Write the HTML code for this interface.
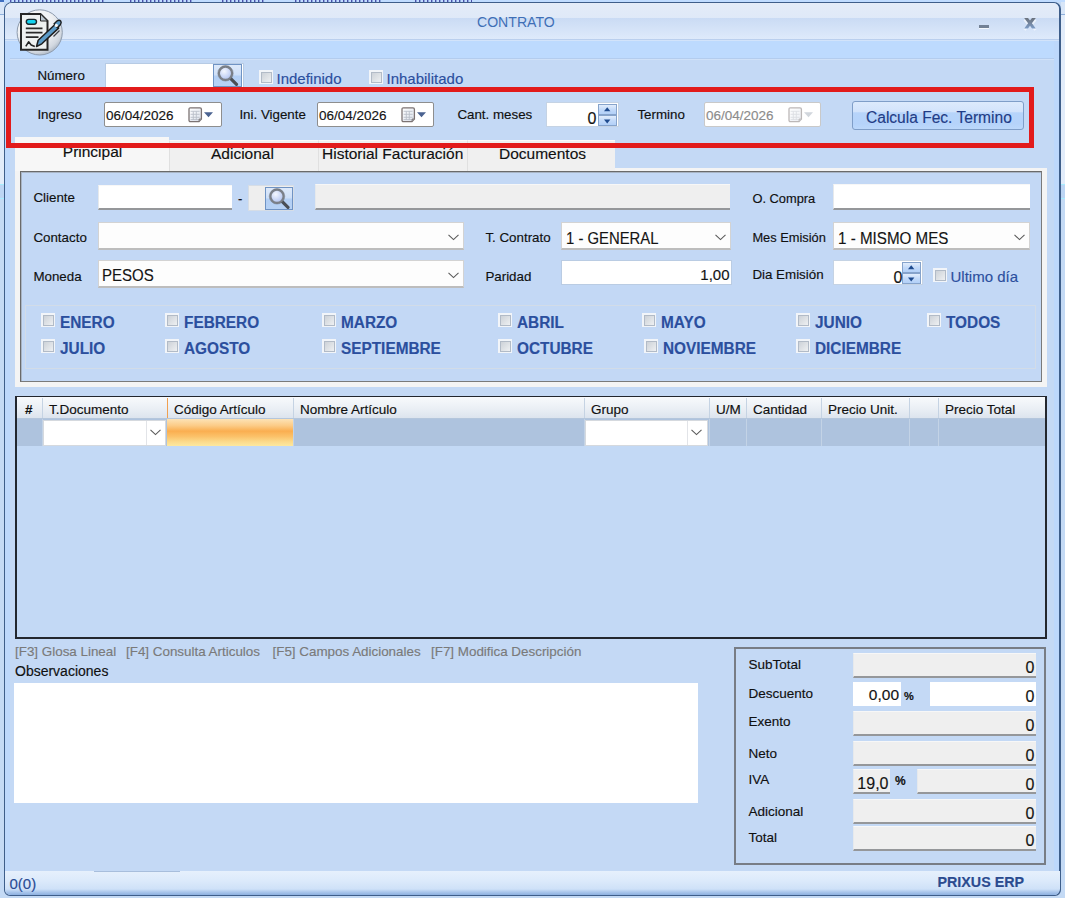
<!DOCTYPE html>
<html><head><meta charset="utf-8"><title>CONTRATO</title>
<style>
*{margin:0;padding:0;box-sizing:border-box;}
html,body{width:1065px;height:898px;overflow:hidden;}
body{position:relative;background:#BFDBFF;font-family:"Liberation Sans", sans-serif;}
div{position:absolute;}
.t{white-space:nowrap;-webkit-text-stroke:0.15px currentColor;}
svg{display:block;}
</style></head><body>

<div style="left:0px;top:0px;width:1065px;height:898px;background:#C4DAF5;"></div>
<div style="left:0px;top:0px;width:4px;height:14px;background:#D8E6F8;"></div>
<div style="left:0px;top:14px;width:4px;height:1px;background:#8FB0DC;"></div>
<div style="left:0px;top:15px;width:4px;height:169px;background:#E2ECFA;"></div>
<div style="left:0px;top:184px;width:4px;height:1px;background:#A6EEFF;"></div>
<div style="left:0px;top:185px;width:4px;height:13px;background:#BCD5F4;"></div>
<div style="left:0px;top:198px;width:4px;height:1px;background:#A6EEFF;"></div>
<div style="left:1061px;top:0px;width:4px;height:14px;background:#D8E6F8;"></div>
<div style="left:1061px;top:14px;width:4px;height:1px;background:#8FB0DC;"></div>
<div style="left:1061px;top:15px;width:4px;height:169px;background:#E2ECFA;"></div>
<div style="left:1061px;top:184px;width:4px;height:1px;background:#A6EEFF;"></div>
<div style="left:1061px;top:185px;width:4px;height:13px;background:#BCD5F4;"></div>
<div style="left:1061px;top:198px;width:4px;height:1px;background:#A6EEFF;"></div>
<div style="left:0px;top:0px;width:4px;height:2px;background:#3F6FC0;"></div>
<div style="left:4px;top:0px;width:1061px;height:2px;background:#C0DCFF;"></div>
<div style="left:10px;top:0px;width:95px;height:2px;background:repeating-linear-gradient(90deg,#4B4FA8 0px,#4B4FA8 1px,#8CA6DC 1px,#8CA6DC 2px,#C0DCFF 2px,#C0DCFF 4px);"></div>
<div style="left:130px;top:0px;width:62px;height:2px;background:repeating-linear-gradient(90deg,#4B4FA8 0px,#4B4FA8 1px,#8CA6DC 1px,#8CA6DC 2px,#C0DCFF 2px,#C0DCFF 4px);"></div>
<div style="left:222px;top:0px;width:44px;height:2px;background:repeating-linear-gradient(90deg,#4B4FA8 0px,#4B4FA8 1px,#8CA6DC 1px,#8CA6DC 2px,#C0DCFF 2px,#C0DCFF 4px);"></div>
<div style="left:295px;top:0px;width:87px;height:2px;background:repeating-linear-gradient(90deg,#4B4FA8 0px,#4B4FA8 1px,#8CA6DC 1px,#8CA6DC 2px,#C0DCFF 2px,#C0DCFF 4px);"></div>
<div style="left:415px;top:0px;width:57px;height:2px;background:repeating-linear-gradient(90deg,#4B4FA8 0px,#4B4FA8 1px,#8CA6DC 1px,#8CA6DC 2px,#C0DCFF 2px,#C0DCFF 4px);"></div>
<div style="left:4px;top:2px;width:1057px;height:894px;background:#C4D9F5;border:1.5px solid #3E5E8A;border-right-width:2px;border-radius:8px 7px 6px 6px;overflow:hidden;"></div>
<div style="left:5px;top:3px;width:1054px;height:15px;background:linear-gradient(#E4ECF8,#DFE9F8);border-radius:7px 6px 0 0;"></div>
<div style="left:5px;top:18px;width:1054px;height:21px;background:linear-gradient(#CADBF4,#DEEAFB);"></div>
<div style="left:5px;top:39px;width:1054px;height:1px;background:#BACFEE;"></div>
<div style="left:5px;top:40px;width:1054px;height:1px;background:#D2E3FA;"></div>
<div style="left:5px;top:41px;width:1054px;height:17px;background:#BDDAFE;"></div>
<div style="left:10px;top:58px;width:1044px;height:1px;background:#B3CCEE;"></div>
<div style="left:10px;top:59px;width:1044px;height:1px;background:#D0E1F8;"></div>
<div style="left:5px;top:41px;width:5px;height:830px;background:#BDD8FC;"></div>
<div style="left:1054px;top:41px;width:5px;height:830px;background:#BDD8FC;"></div>
<div class="t" style="left:477px;top:15.45px;font-size:14.6px;line-height:14.6px;color:#3F6FB6;transform:scaleX(0.965);transform-origin:0 0;-webkit-text-stroke:0;">CONTRATO</div>
<div style="left:979px;top:25px;width:10px;height:3px;background:#728196;box-shadow:0 1px 0 #F4F8FD;"></div>
<div style="left:1022px;top:16px;width:16px;height:15px;"><svg width="16" height="15" viewBox="0 0 16 15">
<defs><linearGradient id="xg" x1="0" y1="0" x2="0" y2="1"><stop offset="0" stop-color="#6B727C"/><stop offset="0.5" stop-color="#74859E"/><stop offset="1" stop-color="#7C9CC8"/></linearGradient></defs>
<path d="M2.5 2.8 L7 8 L2.5 13.2 M13.5 2.8 L9 8 L13.5 13.2" fill="none" stroke="#F2F6FC" stroke-width="2.6" opacity="0.8" transform="translate(0,0.8)"/>
<path d="M2.2 2 H6 L8 4.6 L10 2 H13.8 L9.9 7.2 L13.8 12.5 H10 L8 9.8 L6 12.5 H2.2 L6.1 7.2 Z" fill="url(#xg)"/>
</svg></div>
<div style="left:0px;top:0px;width:70px;height:60px;"><svg width="70" height="60" viewBox="0 0 70 60">
<defs><radialGradient id="g1" cx="38%" cy="30%" r="75%"><stop offset="0" stop-color="#FFFFFF"/><stop offset="0.55" stop-color="#EEF0F3"/><stop offset="0.85" stop-color="#D2D8E0"/><stop offset="1" stop-color="#A9B4C2"/></radialGradient></defs>
<circle cx="39.7" cy="32.4" r="22.6" fill="url(#g1)" stroke="#8E9BAD" stroke-width="1"/>
<path d="M21 14 H40.5 L47.5 21 V49.8 H21 Z" fill="#EEF1F1" stroke="#262626" stroke-width="2"/>
<path d="M40.5 14 V21 H47.5 Z" fill="#BCC6CF" stroke="#262626" stroke-width="1"/>
<rect x="26.3" y="19.4" width="10.2" height="4.8" rx="2.4" fill="#12D3F0" stroke="#1B2A30" stroke-width="1.4"/>
<path d="M25.8 28.3 H42.5 M25.8 32.7 H42.5 M25.8 37.2 H38.5" stroke="#2A2A2A" stroke-width="1.7"/>
<path d="M25.8 46.3 L28.6 41.8 L31.2 44.9 L34.8 46.4" fill="none" stroke="#222" stroke-width="1.6" stroke-linejoin="round"/>
<path d="M36.5 46.5 L38.2 40.2 L55 24.5 L58.6 28.1 L41.8 43.8 Z" fill="#5C9BC8" stroke="#1D1D1D" stroke-width="1.5" stroke-linejoin="round"/>
<path d="M54.2 23.8 L57.2 20.8 Q59.5 19.5 60.8 21.2 Q61.8 22.6 60.3 24.8 L57.6 27.6 Z" fill="#5C9BC8" stroke="#1D1D1D" stroke-width="1.4"/>
<circle cx="56.3" cy="25.4" r="1.6" fill="#F4F6F8"/>
<path d="M53.5 36.5 L59.5 30.5" stroke="#3A3F45" stroke-width="1.2"/>
</svg></div>
<div class="t" style="left:37.4px;top:68.71px;font-size:13.35px;line-height:13.35px;color:#101010;">Número</div>
<div style="left:105px;top:63px;width:139px;height:24px;background:#fff;border:1px solid #B7CBE4;border-bottom:none;"></div>
<div style="left:213px;top:64px;width:29px;height:23px;border:1px solid #6F93C4;background:linear-gradient(#DDE9FA 0%,#CFE0F8 45%,#B3CFF4 55%,#B7D2F5 100%);"><svg style="position:absolute;left:0px;top:0px" width="27" height="21" viewBox="0 0 27 21">
<defs><radialGradient id="lens" cx="40%" cy="35%" r="70%"><stop offset="0" stop-color="#F4F7FE"/><stop offset="0.6" stop-color="#C9D6F6"/><stop offset="1" stop-color="#AFC0EC"/></radialGradient></defs>
<path d="M16.5 13.3 L22.5 19.3" stroke="#4A4F56" stroke-width="3.2" stroke-linecap="round"/>
<circle cx="11.5" cy="8.3" r="6.6" fill="url(#lens)" stroke="#7B8088" stroke-width="2.2"/>
<circle cx="11.5" cy="8.3" r="7.8" fill="none" stroke="#5E636B" stroke-width="0.6" opacity="0.6"/>
</svg></div>
<div style="left:259px;top:70px;width:14px;height:14px;border:1.5px solid #F2F5F9;background:#F2F5F9;"><div style="left:0.5px;top:0.5px;right:0.5px;bottom:0.5px;border:1.5px solid #B2BBC7;background:linear-gradient(135deg,#CDD2D8,#EEF0F2);"></div></div>
<div class="t" style="left:276.5px;top:71.31px;font-size:15px;line-height:15px;color:#2B4F9E;">Indefinido</div>
<div style="left:369px;top:70px;width:14px;height:14px;border:1.5px solid #F2F5F9;background:#F2F5F9;"><div style="left:0.5px;top:0.5px;right:0.5px;bottom:0.5px;border:1.5px solid #B2BBC7;background:linear-gradient(135deg,#CDD2D8,#EEF0F2);"></div></div>
<div class="t" style="left:386.5px;top:71.31px;font-size:15px;line-height:15px;color:#2B4F9E;">Inhabilitado</div>
<div style="left:6px;top:87px;width:1028px;height:61px;border:5px solid #E21B1B;z-index:5;"></div>
<div class="t" style="left:37.4px;top:108.21px;font-size:13.35px;line-height:13.35px;color:#101010;">Ingreso</div>
<div style="left:104px;top:102px;width:118px;height:25px;background:#fff;border:1px solid #8E8E8E;border-radius:2px;"></div>
<div class="t" style="left:106px;top:108.58px;font-size:13.5px;line-height:13.5px;color:#141414;">06/04/2026</div>
<div style="left:188px;top:107px;width:30px;height:17px;opacity:1"><svg width="30" height="17" viewBox="0 0 30 17">
<defs><linearGradient id="cg" x1="0" y1="0" x2="1" y2="1"><stop offset="0" stop-color="#FFFFFF"/><stop offset="1" stop-color="#DCE2EC"/></linearGradient></defs>
<path d="M1 2.2 Q1 0.8 2.4 0.8 H12 Q13.4 0.8 13.4 2.2 V12 L11 14.6 H2.4 Q1 14.6 1 13.2 Z" fill="url(#cg)" stroke="#7C7373" stroke-width="1.3"/>
<path d="M2.6 4.3 H11.6 M2.6 7.3 H11.6 M2.6 10.3 H11.6 M2.6 12.6 H10.6 M5.3 4.3 V13 M8.3 4.3 V13" stroke="#BAC0CA" stroke-width="0.9"/>
<path d="M11 14.6 V12 H13.4" fill="#9AA0A8" stroke="#7C7373" stroke-width="0.8"/>
<path d="M16 5.2 H25 L20.5 10.2 Z" fill="#4A6290"/></svg></div>
<div class="t" style="left:239.4px;top:108.21px;font-size:13.35px;line-height:13.35px;color:#101010;">Ini. Vigente</div>
<div style="left:317px;top:102px;width:117px;height:25px;background:#fff;border:1px solid #8E8E8E;border-radius:2px;"></div>
<div class="t" style="left:319px;top:108.58px;font-size:13.5px;line-height:13.5px;color:#141414;">06/04/2026</div>
<div style="left:401px;top:107px;width:30px;height:17px;opacity:1"><svg width="30" height="17" viewBox="0 0 30 17">
<defs><linearGradient id="cg" x1="0" y1="0" x2="1" y2="1"><stop offset="0" stop-color="#FFFFFF"/><stop offset="1" stop-color="#DCE2EC"/></linearGradient></defs>
<path d="M1 2.2 Q1 0.8 2.4 0.8 H12 Q13.4 0.8 13.4 2.2 V12 L11 14.6 H2.4 Q1 14.6 1 13.2 Z" fill="url(#cg)" stroke="#7C7373" stroke-width="1.3"/>
<path d="M2.6 4.3 H11.6 M2.6 7.3 H11.6 M2.6 10.3 H11.6 M2.6 12.6 H10.6 M5.3 4.3 V13 M8.3 4.3 V13" stroke="#BAC0CA" stroke-width="0.9"/>
<path d="M11 14.6 V12 H13.4" fill="#9AA0A8" stroke="#7C7373" stroke-width="0.8"/>
<path d="M16 5.2 H25 L20.5 10.2 Z" fill="#4A6290"/></svg></div>
<div class="t" style="left:457.4px;top:108.21px;font-size:13.35px;line-height:13.35px;color:#101010;">Cant. meses</div>
<div style="left:546px;top:102px;width:73px;height:25px;background:#fff;border:1px solid #C5D3E4;"></div>
<div style="left:598px;top:104px;width:19px;height:22px;"><svg width="19" height="22" viewBox="0 0 19 22">
<defs><linearGradient id="sg" x1="0" y1="0" x2="0" y2="1"><stop offset="0" stop-color="#E2EDFC"/><stop offset="0.5" stop-color="#C3DAF9"/><stop offset="1" stop-color="#B2D0F8"/></linearGradient></defs>
<rect x="0" y="0" width="19" height="22" fill="#86A3CB"/>
<rect x="1" y="1" width="17" height="9.0" fill="url(#sg)"/>
<rect x="1" y="12.0" width="17" height="9.0" fill="url(#sg)"/>
<path d="M6 7.2 L12.4 7.2 L9.2 3.2 Z" fill="#1F4B8E"/>
<path d="M6 15.4 L12.4 15.4 L9.2 19.4 Z" fill="#1F4B8E"/></svg></div>
<div class="t" style="left:566.5px;width:30px;text-align:right;top:110.96px;font-size:16px;line-height:16px;color:#141414;">0</div>
<div class="t" style="left:637.4px;top:108.21px;font-size:13.35px;line-height:13.35px;color:#101010;">Termino</div>
<div style="left:704px;top:102px;width:117px;height:25px;background:#fff;border:1px solid #C9C9C9;border-radius:2px;"></div>
<div class="t" style="left:706px;top:108.58px;font-size:13.5px;line-height:13.5px;color:#8C8C8C;">06/04/2026</div>
<div style="left:788px;top:107px;width:30px;height:17px;opacity:0.5"><svg width="30" height="17" viewBox="0 0 30 17">
<defs><linearGradient id="cg" x1="0" y1="0" x2="1" y2="1"><stop offset="0" stop-color="#FFFFFF"/><stop offset="1" stop-color="#DCE2EC"/></linearGradient></defs>
<path d="M1 2.2 Q1 0.8 2.4 0.8 H12 Q13.4 0.8 13.4 2.2 V12 L11 14.6 H2.4 Q1 14.6 1 13.2 Z" fill="url(#cg)" stroke="#7C7373" stroke-width="1.3"/>
<path d="M2.6 4.3 H11.6 M2.6 7.3 H11.6 M2.6 10.3 H11.6 M2.6 12.6 H10.6 M5.3 4.3 V13 M8.3 4.3 V13" stroke="#BAC0CA" stroke-width="0.9"/>
<path d="M11 14.6 V12 H13.4" fill="#9AA0A8" stroke="#7C7373" stroke-width="0.8"/>
<path d="M16 5.2 H25 L20.5 10.2 Z" fill="#A5AEBB"/></svg></div>
<div style="left:852px;top:101px;width:172px;height:29px;border:1px solid #8FAAD0;border-radius:3px;background:linear-gradient(#DCEAFC 0%,#D2E3FB 36%,#B7D4FA 40%,#B5D3FA 80%,#BCD8FB 100%);border-color:#7F9EC8;"></div>
<div class="t" style="left:866px;top:109.76px;font-size:16px;line-height:16px;color:#1F3C86;transform:scaleX(0.972);transform-origin:0 0;">Calcula Fec. Termino</div>
<div style="left:15px;top:168px;width:1032px;height:219px;background:#F4F4F4;"></div>
<div style="left:15px;top:137px;width:154px;height:34px;background:#F7F7F7;"></div>
<div style="left:169px;top:140px;width:149px;height:31px;background:#F0F0F0;border-left:1px solid #E0E0E0;border-top:1px solid #FAFAFA;"></div>
<div class="t" style="left:211px;top:146.39px;font-size:15.5px;line-height:15.5px;color:#101010;">Adicional</div>
<div style="left:318px;top:140px;width:149px;height:31px;background:#F0F0F0;border-left:1px solid #E0E0E0;border-top:1px solid #FAFAFA;"></div>
<div class="t" style="left:322px;top:146.39px;font-size:15.5px;line-height:15.5px;color:#101010;">Historial Facturación</div>
<div style="left:467px;top:140px;width:148px;height:31px;background:#F0F0F0;border-left:1px solid #E0E0E0;border-top:1px solid #FAFAFA;"></div>
<div class="t" style="left:499px;top:146.39px;font-size:15.5px;line-height:15.5px;color:#101010;">Documentos</div>
<div class="t" style="left:62.8px;top:143.89px;font-size:15.5px;line-height:15.5px;color:#101010;">Principal</div>
<div style="left:615px;top:140px;width:432px;height:28px;background:#C4D9F5;"></div>
<div style="left:20px;top:171px;width:1022px;height:211px;background:#C3D8F5;border:1px solid #6A6A6A;border-right-color:#7A7A7A;border-bottom-color:#7A7A7A;box-shadow:inset 1px 1px 0 #A8B4C4;"></div>
<div class="t" style="left:33.4px;top:190.71px;font-size:13.35px;line-height:13.35px;color:#101010;">Cliente</div>
<div style="left:98px;top:185px;width:134px;height:25px;background:#FFFFFF;border-left:1px solid #E6E9EC;border-top:1px solid #F7F7F7;border-bottom:2px solid #95979A;"></div>
<div class="t" style="left:238px;top:192.00px;font-size:13px;line-height:13px;color:#101010;">-</div>
<div style="left:248px;top:185px;width:46px;height:26px;background:#EEEEEE;border:1px solid #D6DDE6;"></div>
<div style="left:265px;top:187px;width:28px;height:23px;border:1px solid #6F93C4;background:linear-gradient(#DDE9FA 0%,#CFE0F8 45%,#B3CFF4 55%,#B7D2F5 100%);"><svg style="position:absolute;left:0px;top:0px" width="26" height="21" viewBox="0 0 26 21">
<defs><radialGradient id="lens" cx="40%" cy="35%" r="70%"><stop offset="0" stop-color="#F4F7FE"/><stop offset="0.6" stop-color="#C9D6F6"/><stop offset="1" stop-color="#AFC0EC"/></radialGradient></defs>
<path d="M16.0 13.3 L22.0 19.3" stroke="#4A4F56" stroke-width="3.2" stroke-linecap="round"/>
<circle cx="11.0" cy="8.3" r="6.6" fill="url(#lens)" stroke="#7B8088" stroke-width="2.2"/>
<circle cx="11.0" cy="8.3" r="7.8" fill="none" stroke="#5E636B" stroke-width="0.6" opacity="0.6"/>
</svg></div>
<div style="left:315px;top:184px;width:415px;height:26px;background:#EFEFEF;border-left:1px solid #E6E9EC;border-top:1px solid #F7F7F7;border-bottom:2px solid #95979A;"></div>
<div class="t" style="left:752.4px;top:192.63px;font-size:12.85px;line-height:12.85px;color:#101010;">O. Compra</div>
<div style="left:833px;top:184px;width:197px;height:26px;background:#FFFFFF;border-left:1px solid #E6E9EC;border-top:1px solid #F7F7F7;border-bottom:2px solid #95979A;"></div>
<div class="t" style="left:33.4px;top:230.71px;font-size:13.35px;line-height:13.35px;color:#101010;">Contacto</div>
<div style="left:98px;top:222px;width:366px;height:28px;background:#FDFDFD;border:1px solid #D3D3D3;border-bottom:2px solid #BDBDBD;"></div>
<div style="left:448px;top:234px;width:11px;height:7px;"><svg width="11" height="7" viewBox="0 0 11 7"><path d="M0.5 0.8 L5.5 5.6 L10.5 0.8" fill="none" stroke="#5A5A5A" stroke-width="1.1"/></svg></div>
<div class="t" style="left:485.4px;top:231.21px;font-size:13.35px;line-height:13.35px;color:#101010;">T. Contrato</div>
<div style="left:561px;top:222px;width:170px;height:28px;background:#FDFDFD;border:1px solid #D3D3D3;border-bottom:2px solid #BDBDBD;"></div>
<div style="left:715px;top:234px;width:11px;height:7px;"><svg width="11" height="7" viewBox="0 0 11 7"><path d="M0.5 0.8 L5.5 5.6 L10.5 0.8" fill="none" stroke="#5A5A5A" stroke-width="1.1"/></svg></div>
<div class="t" style="left:565.5px;top:229.54px;font-size:16.5px;line-height:16.5px;color:#141414;transform:scaleX(0.9);transform-origin:0 0;">1 - GENERAL</div>
<div class="t" style="left:752.4px;top:231.63px;font-size:12.85px;line-height:12.85px;color:#101010;">Mes Emisión</div>
<div style="left:833px;top:222px;width:197px;height:28px;background:#FDFDFD;border:1px solid #D3D3D3;border-bottom:2px solid #BDBDBD;"></div>
<div style="left:1014px;top:234px;width:11px;height:7px;"><svg width="11" height="7" viewBox="0 0 11 7"><path d="M0.5 0.8 L5.5 5.6 L10.5 0.8" fill="none" stroke="#5A5A5A" stroke-width="1.1"/></svg></div>
<div class="t" style="left:837.8px;top:229.54px;font-size:16.5px;line-height:16.5px;color:#141414;transform:scaleX(0.92);transform-origin:0 0;">1 - MISMO MES</div>
<div class="t" style="left:33.4px;top:269.71px;font-size:13.35px;line-height:13.35px;color:#101010;">Moneda</div>
<div style="left:98px;top:260px;width:366px;height:28px;background:#FDFDFD;border:1px solid #D3D3D3;border-bottom:2px solid #BDBDBD;"></div>
<div style="left:448px;top:272px;width:11px;height:7px;"><svg width="11" height="7" viewBox="0 0 11 7"><path d="M0.5 0.8 L5.5 5.6 L10.5 0.8" fill="none" stroke="#5A5A5A" stroke-width="1.1"/></svg></div>
<div class="t" style="left:102.2px;top:267.04px;font-size:16.5px;line-height:16.5px;color:#141414;transform:scaleX(0.91);transform-origin:0 0;">PESOS</div>
<div class="t" style="left:485.4px;top:269.71px;font-size:13.35px;line-height:13.35px;color:#101010;">Paridad</div>
<div style="left:561px;top:260px;width:171px;height:25px;background:#fff;border:1px solid #BACCE3;"></div>
<div class="t" style="left:669.5px;width:60px;text-align:right;top:267.31px;font-size:15px;line-height:15px;color:#141414;">1,00</div>
<div class="t" style="left:752.4px;top:268.21px;font-size:13.35px;line-height:13.35px;color:#101010;">Dia Emisión</div>
<div style="left:833px;top:260px;width:90px;height:25px;background:#fff;border:1px solid #C5D3E4;"></div>
<div style="left:902px;top:262px;width:19px;height:22px;"><svg width="19" height="22" viewBox="0 0 19 22">
<defs><linearGradient id="sg" x1="0" y1="0" x2="0" y2="1"><stop offset="0" stop-color="#E2EDFC"/><stop offset="0.5" stop-color="#C3DAF9"/><stop offset="1" stop-color="#B2D0F8"/></linearGradient></defs>
<rect x="0" y="0" width="19" height="22" fill="#86A3CB"/>
<rect x="1" y="1" width="17" height="9.0" fill="url(#sg)"/>
<rect x="1" y="12.0" width="17" height="9.0" fill="url(#sg)"/>
<path d="M6 7.2 L12.4 7.2 L9.2 3.2 Z" fill="#1F4B8E"/>
<path d="M6 15.4 L12.4 15.4 L9.2 19.4 Z" fill="#1F4B8E"/></svg></div>
<div class="t" style="left:872.5px;width:30px;text-align:right;top:269.76px;font-size:16px;line-height:16px;color:#141414;">0</div>
<div style="left:933px;top:268px;width:14px;height:14px;border:1.5px solid #F2F5F9;background:#F2F5F9;"><div style="left:0.5px;top:0.5px;right:0.5px;bottom:0.5px;border:1.5px solid #B2BBC7;background:linear-gradient(135deg,#CDD2D8,#EEF0F2);"></div></div>
<div class="t" style="left:950.5px;top:269.31px;font-size:15px;line-height:15px;color:#2B4F9E;">Ultimo día</div>
<div style="left:25px;top:305px;width:1011px;height:64px;border:1px solid #D2DCE8;"></div>
<div style="left:41px;top:313px;width:14px;height:14px;border:1.5px solid #F2F5F9;background:#F2F5F9;"><div style="left:0.5px;top:0.5px;right:0.5px;bottom:0.5px;border:1.5px solid #B2BBC7;background:linear-gradient(135deg,#CDD2D8,#EEF0F2);"></div></div>
<div class="t" style="left:60px;top:314.96px;font-size:16px;line-height:16px;color:#2B4F9E;font-weight:bold;transform:scaleX(0.96);transform-origin:0 0;">ENERO</div>
<div style="left:41px;top:339px;width:14px;height:14px;border:1.5px solid #F2F5F9;background:#F2F5F9;"><div style="left:0.5px;top:0.5px;right:0.5px;bottom:0.5px;border:1.5px solid #B2BBC7;background:linear-gradient(135deg,#CDD2D8,#EEF0F2);"></div></div>
<div class="t" style="left:60px;top:340.96px;font-size:16px;line-height:16px;color:#2B4F9E;font-weight:bold;transform:scaleX(0.96);transform-origin:0 0;">JULIO</div>
<div style="left:165px;top:313px;width:14px;height:14px;border:1.5px solid #F2F5F9;background:#F2F5F9;"><div style="left:0.5px;top:0.5px;right:0.5px;bottom:0.5px;border:1.5px solid #B2BBC7;background:linear-gradient(135deg,#CDD2D8,#EEF0F2);"></div></div>
<div class="t" style="left:184px;top:314.96px;font-size:16px;line-height:16px;color:#2B4F9E;font-weight:bold;transform:scaleX(0.96);transform-origin:0 0;">FEBRERO</div>
<div style="left:165px;top:339px;width:14px;height:14px;border:1.5px solid #F2F5F9;background:#F2F5F9;"><div style="left:0.5px;top:0.5px;right:0.5px;bottom:0.5px;border:1.5px solid #B2BBC7;background:linear-gradient(135deg,#CDD2D8,#EEF0F2);"></div></div>
<div class="t" style="left:184px;top:340.96px;font-size:16px;line-height:16px;color:#2B4F9E;font-weight:bold;transform:scaleX(0.96);transform-origin:0 0;">AGOSTO</div>
<div style="left:322px;top:313px;width:14px;height:14px;border:1.5px solid #F2F5F9;background:#F2F5F9;"><div style="left:0.5px;top:0.5px;right:0.5px;bottom:0.5px;border:1.5px solid #B2BBC7;background:linear-gradient(135deg,#CDD2D8,#EEF0F2);"></div></div>
<div class="t" style="left:341px;top:314.96px;font-size:16px;line-height:16px;color:#2B4F9E;font-weight:bold;transform:scaleX(0.96);transform-origin:0 0;">MARZO</div>
<div style="left:322px;top:339px;width:14px;height:14px;border:1.5px solid #F2F5F9;background:#F2F5F9;"><div style="left:0.5px;top:0.5px;right:0.5px;bottom:0.5px;border:1.5px solid #B2BBC7;background:linear-gradient(135deg,#CDD2D8,#EEF0F2);"></div></div>
<div class="t" style="left:341px;top:340.96px;font-size:16px;line-height:16px;color:#2B4F9E;font-weight:bold;transform:scaleX(0.96);transform-origin:0 0;">SEPTIEMBRE</div>
<div style="left:498px;top:313px;width:14px;height:14px;border:1.5px solid #F2F5F9;background:#F2F5F9;"><div style="left:0.5px;top:0.5px;right:0.5px;bottom:0.5px;border:1.5px solid #B2BBC7;background:linear-gradient(135deg,#CDD2D8,#EEF0F2);"></div></div>
<div class="t" style="left:517px;top:314.96px;font-size:16px;line-height:16px;color:#2B4F9E;font-weight:bold;transform:scaleX(0.96);transform-origin:0 0;">ABRIL</div>
<div style="left:498px;top:339px;width:14px;height:14px;border:1.5px solid #F2F5F9;background:#F2F5F9;"><div style="left:0.5px;top:0.5px;right:0.5px;bottom:0.5px;border:1.5px solid #B2BBC7;background:linear-gradient(135deg,#CDD2D8,#EEF0F2);"></div></div>
<div class="t" style="left:517px;top:340.96px;font-size:16px;line-height:16px;color:#2B4F9E;font-weight:bold;transform:scaleX(0.96);transform-origin:0 0;">OCTUBRE</div>
<div style="left:642px;top:313px;width:14px;height:14px;border:1.5px solid #F2F5F9;background:#F2F5F9;"><div style="left:0.5px;top:0.5px;right:0.5px;bottom:0.5px;border:1.5px solid #B2BBC7;background:linear-gradient(135deg,#CDD2D8,#EEF0F2);"></div></div>
<div class="t" style="left:661px;top:314.96px;font-size:16px;line-height:16px;color:#2B4F9E;font-weight:bold;transform:scaleX(0.96);transform-origin:0 0;">MAYO</div>
<div style="left:644px;top:339px;width:14px;height:14px;border:1.5px solid #F2F5F9;background:#F2F5F9;"><div style="left:0.5px;top:0.5px;right:0.5px;bottom:0.5px;border:1.5px solid #B2BBC7;background:linear-gradient(135deg,#CDD2D8,#EEF0F2);"></div></div>
<div class="t" style="left:663px;top:340.96px;font-size:16px;line-height:16px;color:#2B4F9E;font-weight:bold;transform:scaleX(0.96);transform-origin:0 0;">NOVIEMBRE</div>
<div style="left:796px;top:313px;width:14px;height:14px;border:1.5px solid #F2F5F9;background:#F2F5F9;"><div style="left:0.5px;top:0.5px;right:0.5px;bottom:0.5px;border:1.5px solid #B2BBC7;background:linear-gradient(135deg,#CDD2D8,#EEF0F2);"></div></div>
<div class="t" style="left:815px;top:314.96px;font-size:16px;line-height:16px;color:#2B4F9E;font-weight:bold;transform:scaleX(0.96);transform-origin:0 0;">JUNIO</div>
<div style="left:796px;top:339px;width:14px;height:14px;border:1.5px solid #F2F5F9;background:#F2F5F9;"><div style="left:0.5px;top:0.5px;right:0.5px;bottom:0.5px;border:1.5px solid #B2BBC7;background:linear-gradient(135deg,#CDD2D8,#EEF0F2);"></div></div>
<div class="t" style="left:815px;top:340.96px;font-size:16px;line-height:16px;color:#2B4F9E;font-weight:bold;transform:scaleX(0.96);transform-origin:0 0;">DICIEMBRE</div>
<div style="left:927px;top:313px;width:14px;height:14px;border:1.5px solid #F2F5F9;background:#F2F5F9;"><div style="left:0.5px;top:0.5px;right:0.5px;bottom:0.5px;border:1.5px solid #B2BBC7;background:linear-gradient(135deg,#CDD2D8,#EEF0F2);"></div></div>
<div class="t" style="left:946px;top:314.96px;font-size:16px;line-height:16px;color:#2B4F9E;font-weight:bold;transform:scaleX(0.96);transform-origin:0 0;">TODOS</div>
<div style="left:15px;top:396px;width:1032px;height:243px;background:#C3D9F5;border:2px solid #23272E;border-top-width:1.5px;"></div>
<div style="left:17px;top:397px;width:1028px;height:22px;background:linear-gradient(#F8FAFC,#E9EEF4 60%,#DCE4EE);border-bottom:1px solid #B4C6DC;"></div>
<div class="t" style="left:25px;top:403.08px;font-size:13.5px;line-height:13.5px;color:#101010;font-weight:bold;">#</div>
<div style="left:42px;top:398px;width:1px;height:20px;background:#C5D3E3;"></div>
<div class="t" style="left:49px;top:403.08px;font-size:13.5px;line-height:13.5px;color:#101010;">T.Documento</div>
<div style="left:167px;top:398px;width:1px;height:20px;background:#F0A050;"></div>
<div class="t" style="left:174px;top:403.08px;font-size:13.5px;line-height:13.5px;color:#101010;">Código Artículo</div>
<div style="left:293px;top:398px;width:1px;height:20px;background:#C5D3E3;"></div>
<div class="t" style="left:300px;top:403.08px;font-size:13.5px;line-height:13.5px;color:#101010;">Nombre Artículo</div>
<div style="left:584px;top:398px;width:1px;height:20px;background:#C5D3E3;"></div>
<div class="t" style="left:591px;top:403.08px;font-size:13.5px;line-height:13.5px;color:#101010;">Grupo</div>
<div style="left:709px;top:398px;width:1px;height:20px;background:#C5D3E3;"></div>
<div class="t" style="left:716px;top:403.08px;font-size:13.5px;line-height:13.5px;color:#101010;">U/M</div>
<div style="left:746px;top:398px;width:1px;height:20px;background:#C5D3E3;"></div>
<div class="t" style="left:753px;top:403.08px;font-size:13.5px;line-height:13.5px;color:#101010;">Cantidad</div>
<div style="left:821px;top:398px;width:1px;height:20px;background:#C5D3E3;"></div>
<div class="t" style="left:828px;top:403.08px;font-size:13.5px;line-height:13.5px;color:#101010;">Precio Unit.</div>
<div style="left:909px;top:398px;width:1px;height:20px;background:#C5D3E3;"></div>
<div style="left:938px;top:398px;width:1px;height:20px;background:#C5D3E3;"></div>
<div class="t" style="left:945px;top:403.08px;font-size:13.5px;line-height:13.5px;color:#101010;">Precio Total</div>
<div style="left:17px;top:419px;width:1028px;height:27px;background:#AEC3DE;"></div>
<div style="left:42px;top:419px;width:1px;height:27px;background:#C3D3E6;"></div>
<div style="left:167px;top:419px;width:1px;height:27px;background:#C3D3E6;"></div>
<div style="left:293px;top:419px;width:1px;height:27px;background:#C3D3E6;"></div>
<div style="left:584px;top:419px;width:1px;height:27px;background:#C3D3E6;"></div>
<div style="left:709px;top:419px;width:1px;height:27px;background:#C3D3E6;"></div>
<div style="left:746px;top:419px;width:1px;height:27px;background:#C3D3E6;"></div>
<div style="left:821px;top:419px;width:1px;height:27px;background:#C3D3E6;"></div>
<div style="left:909px;top:419px;width:1px;height:27px;background:#C3D3E6;"></div>
<div style="left:938px;top:419px;width:1px;height:27px;background:#C3D3E6;"></div>
<div style="left:43px;top:420px;width:123px;height:26px;background:#FFF;border:1px solid #D5D9DE;"></div>
<div style="left:146px;top:421px;width:1px;height:24px;background:#E2E4E8;"></div>
<div style="left:150px;top:429px;width:11px;height:7px;"><svg width="11" height="7" viewBox="0 0 11 7"><path d="M0.5 0.8 L5.5 5.6 L10.5 0.8" fill="none" stroke="#5A5A5A" stroke-width="1.1"/></svg></div>
<div style="left:167px;top:419px;width:126px;height:27px;background:linear-gradient(#FDE3B6 0%,#FCCB86 25%,#FAAE50 45%,#FBC26A 65%,#FCDB8C 85%,#FDE89E 100%);"></div>
<div style="left:585px;top:420px;width:123px;height:26px;background:#FFF;border:1px solid #D5D9DE;"></div>
<div style="left:687px;top:421px;width:1px;height:24px;background:#E2E4E8;"></div>
<div style="left:691px;top:429px;width:11px;height:7px;"><svg width="11" height="7" viewBox="0 0 11 7"><path d="M0.5 0.8 L5.5 5.6 L10.5 0.8" fill="none" stroke="#5A5A5A" stroke-width="1.1"/></svg></div>
<div class="t" style="left:15px;top:644.66px;font-size:13.4px;line-height:13.4px;color:#7A7A7A;">[F3] Glosa Lineal</div>
<div class="t" style="left:126px;top:644.66px;font-size:13.4px;line-height:13.4px;color:#7A7A7A;">[F4] Consulta Articulos</div>
<div class="t" style="left:272.5px;top:644.66px;font-size:13.4px;line-height:13.4px;color:#7A7A7A;">[F5] Campos Adicionales</div>
<div class="t" style="left:431px;top:644.66px;font-size:13.4px;line-height:13.4px;color:#7A7A7A;">[F7] Modifica Descripción</div>
<div class="t" style="left:15px;top:664.16px;font-size:14px;line-height:14px;color:#101010;">Observaciones</div>
<div style="left:14px;top:683px;width:684px;height:120px;background:#FFFFFF;"></div>
<div style="left:734px;top:647px;width:312px;height:218px;border:2px solid #787D85;"></div>
<div class="t" style="left:748.5px;top:657.58px;font-size:13.5px;line-height:13.5px;color:#101010;">SubTotal</div>
<div style="left:853px;top:653px;width:183px;height:25px;background:#EFEFEF;border-left:1px solid #E6E9EC;border-top:1px solid #F7F7F7;border-bottom:2px solid #95979A;"></div>
<div class="t" style="left:1004.5px;width:30px;text-align:right;top:660.46px;font-size:16px;line-height:16px;color:#141414;">0</div>
<div class="t" style="left:748.5px;top:686.58px;font-size:13.5px;line-height:13.5px;color:#101010;">Descuento</div>
<div style="left:853px;top:682px;width:48px;height:24px;background:#fff;"></div>
<div class="t" style="left:854px;width:45px;text-align:right;top:686.89px;font-size:15.5px;line-height:15.5px;color:#141414;">0,00</div>
<div class="t" style="left:904px;top:690.69px;font-size:11px;line-height:11px;color:#101010;font-weight:bold;">%</div>
<div style="left:930px;top:682px;width:106px;height:24px;background:#fff;"></div>
<div class="t" style="left:1004.5px;width:30px;text-align:right;top:688.96px;font-size:16px;line-height:16px;color:#141414;">0</div>
<div class="t" style="left:748.5px;top:714.58px;font-size:13.5px;line-height:13.5px;color:#101010;">Exento</div>
<div style="left:853px;top:711px;width:183px;height:25px;background:#EFEFEF;border-left:1px solid #E6E9EC;border-top:1px solid #F7F7F7;border-bottom:2px solid #95979A;"></div>
<div class="t" style="left:1004.5px;width:30px;text-align:right;top:718.46px;font-size:16px;line-height:16px;color:#141414;">0</div>
<div class="t" style="left:748.5px;top:747.08px;font-size:13.5px;line-height:13.5px;color:#101010;">Neto</div>
<div style="left:853px;top:741px;width:183px;height:25px;background:#EFEFEF;border-left:1px solid #E6E9EC;border-top:1px solid #F7F7F7;border-bottom:2px solid #95979A;"></div>
<div class="t" style="left:1004.5px;width:30px;text-align:right;top:748.46px;font-size:16px;line-height:16px;color:#141414;">0</div>
<div class="t" style="left:748.5px;top:773.08px;font-size:13.5px;line-height:13.5px;color:#101010;">IVA</div>
<div style="left:853px;top:769px;width:37px;height:25px;background:#EFEFEF;border-left:1px solid #E6E9EC;border-top:1px solid #F7F7F7;border-bottom:2px solid #95979A;"></div>
<div class="t" style="left:848.5px;width:40px;text-align:right;top:776.46px;font-size:16px;line-height:16px;color:#141414;">19,0</div>
<div class="t" style="left:895px;top:774.85px;font-size:12px;line-height:12px;color:#101010;font-weight:bold;">%</div>
<div style="left:917px;top:769px;width:119px;height:25px;background:#EFEFEF;border-left:1px solid #E6E9EC;border-top:1px solid #F7F7F7;border-bottom:2px solid #95979A;"></div>
<div class="t" style="left:1004.5px;width:30px;text-align:right;top:776.96px;font-size:16px;line-height:16px;color:#141414;">0</div>
<div class="t" style="left:748.5px;top:804.58px;font-size:13.5px;line-height:13.5px;color:#101010;">Adicional</div>
<div style="left:853px;top:799px;width:183px;height:25px;background:#EFEFEF;border-left:1px solid #E6E9EC;border-top:1px solid #F7F7F7;border-bottom:2px solid #95979A;"></div>
<div class="t" style="left:1004.5px;width:30px;text-align:right;top:806.46px;font-size:16px;line-height:16px;color:#141414;">0</div>
<div class="t" style="left:748.5px;top:831.08px;font-size:13.5px;line-height:13.5px;color:#101010;">Total</div>
<div style="left:853px;top:826px;width:183px;height:25px;background:#EFEFEF;border-left:1px solid #E6E9EC;border-top:1px solid #F7F7F7;border-bottom:2px solid #95979A;"></div>
<div class="t" style="left:1004.5px;width:30px;text-align:right;top:833.46px;font-size:16px;line-height:16px;color:#141414;">0</div>
<div style="left:5px;top:871px;width:1055px;height:24px;background:linear-gradient(#E6F0FC 0%,#DCEAFB 40%,#CFE1F8 75%,#A9C6EC 88%,#8DB0E0 100%);border-radius:0 0 6px 6px;"></div>
<div style="left:94px;top:871px;width:86px;height:1px;background:#A8BEDC;"></div>
<div class="t" style="left:9.5px;top:875.81px;font-size:15px;line-height:15px;color:#2A4C94;">0(0)</div>
<div class="t" style="left:937.5px;top:874.90px;font-size:14.3px;line-height:14.3px;color:#2B4B8F;font-weight:bold;">PRIXUS ERP</div>
</body></html>
